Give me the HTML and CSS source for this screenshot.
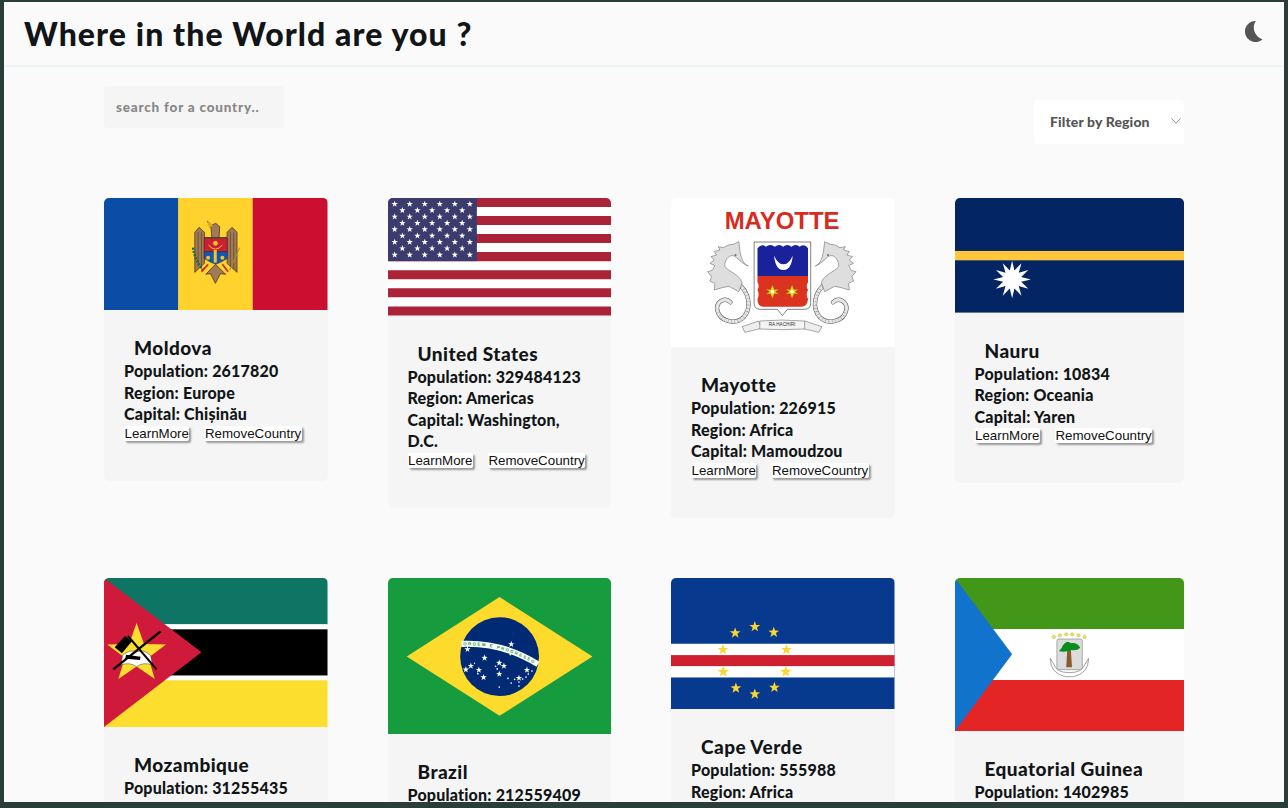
FILE: index.html
```html
<!DOCTYPE html>
<html lang="en">
<head>
<meta charset="utf-8">
<title>Where in the World are you ?</title>
<link rel="stylesheet" href="styles.css">
</head>
<body>
<svg class="defs" width="0" height="0" aria-hidden="true"><defs>
<polygon id="star" points="0,-10 2.4,-3.2 9.5,-3.1 3.8,1.2 5.9,8.1 0,4 -5.9,8.1 -3.8,1.2 -9.5,-3.1 -2.4,-3.2"/>
<g id="seahorse">
<path d="M215,262 C255,290 262,340 235,368 C210,390 165,380 157,345 C153,320 180,305 197,322" fill="none" stroke="#555" stroke-width="13" stroke-linecap="round"/>
<path d="M215,262 C255,290 262,340 235,368 C210,390 165,380 157,345 C153,320 180,305 197,322" fill="none" stroke="#e4e4e4" stroke-width="10" stroke-linecap="round"/>
<path d="M215,262 C255,290 262,340 235,368 C210,390 165,380 157,345" fill="none" stroke="#777" stroke-width="10" stroke-dasharray="1 9"/>
<path d="M250,213 C238,207 230,195 226,172 L222,140 L205,148 L190,150 L176,158 L160,155 L165,165 L148,170 L155,180 L138,185 L148,195 L135,205 L150,212 L142,226 L128,230 L140,245 L135,258 L150,265 L148,285 L172,278 L192,274 L222,290 L232,262 C222,238 195,232 180,215 C178,198 190,180 205,182 C218,186 228,205 250,213 Z" fill="#dedede" stroke="#555" stroke-width="1.5"/>
<circle cx="212" cy="180" r="3" fill="#666"/>
</g>
<g id="flower">
<path d="M0,-21 L6,-6 L20,-8 L9,0 L20,8 L6,6 L0,21 L-6,6 L-20,8 L-9,0 L-20,-8 L-6,-6 Z" fill="#f2d21b" stroke="#7a5a10" stroke-width="1"/>
<circle r="5" fill="#fff"/>
</g>
</defs></svg>
<div class="page">
<header class="topbar">
<h1 class="title">Where in the World are you ?</h1>
<svg class="moon" viewBox="0 0 19 21" aria-label="dark mode"><path d="M11.8 0 A10.5 10.5 0 1 0 18.6 18.2 A12 12 0 0 1 11.8 0 Z"/></svg>
</header>
<main class="content">
<div class="toolbar">
<input class="search" type="text" placeholder="search for a country..">
<div class="filter"><span>Filter by Region</span>
<svg class="chevron" viewBox="0 0 10 6"><path d="M.5.5 5 5.2 9.500.5"/></svg></div>
</div>
<section class="grid">

<article class="card">
<svg class="flag h112" viewBox="12 9 672 336" preserveAspectRatio="none">
<rect x="12" y="9" width="224" height="336" fill="#0a4ca6"/><rect x="235" y="9" width="224" height="336" fill="#ffd22e"/><rect x="459" y="9" width="225" height="336" fill="#cc0f31"/>
<path d="M285,232 V112 L298,97 L314,112 V128 H382 V112 L397,97 L412,112 V232 L382,205 V128 H314 V205 Z" fill="#a27a56" stroke="#33261a" stroke-width="2"/>
<path d="M295,110 V215 M305,112 V222 M392,110 V215 M402,112 V222" stroke="#33261a" stroke-width="1.500"/>
<path d="M322,78 L336,90 L348,85 L360,95 L358,128 H336 L334,100 Z" fill="#a27a56" stroke="#33261a" stroke-width="2"/>
<path d="M322,78 L340,90 L328,100 Z" fill="#e2a626"/>
<path d="M313,130 H383 V170 H313 Z" fill="#cc1f33" stroke="#222" stroke-width="1.500"/>
<path d="M313,170 H383 V190 Q365,202 348,208 Q330,202 313,190 Z" fill="#1357b0" stroke="#222" stroke-width="1.500"/>
<circle cx="347" cy="145" r="7" fill="#f4c52b"/>
<path d="M326,150 Q347,175 368,150" fill="none" stroke="#f4c52b" stroke-width="3"/>
<rect x="342" y="165" width="9" height="38" fill="#f4c52b"/><circle cx="325" cy="188" r="6" fill="#f4c52b"/><circle cx="368" cy="188" r="6" fill="#f4c52b"/>
<path d="M318,238 L347,208 L378,238 L362,236 L347,265 L332,236 Z" fill="#a27a56" stroke="#33261a" stroke-width="2"/>
<path d="M280,158 Q285,195 310,225" fill="none" stroke="#1f6a36" stroke-width="8" stroke-dasharray="6 4"/>
<path d="M420,158 L390,225" fill="none" stroke="#b18e1f" stroke-width="3"/>
<path d="M305,230 L325,208 M385,230 L368,208" stroke="#c8282f" stroke-width="5"/>
</svg>
<div class="info">
<h2 class="name">Moldova</h2>
<p class="line">Population: 2617820</p><p class="line">Region: Europe</p><p class="line">Capital: Chișinău</p>
<div class="actions"><button class="btn">LearnMore</button><button class="btn">RemoveCountry</button></div>
</div>
</article>

<article class="card">
<svg class="flag h118" viewBox="9 9 669 352" preserveAspectRatio="none">
<rect x="9" y="9" width="669" height="352" fill="#fff"/>
<path d="M9,22.500H678M9,76.500H678M9,130.500H678M9,184.500H678M9,238.500H678M9,292.500H678M9,347.500H678" stroke="#ab2337" stroke-width="27"/>
<rect x="9" y="9" width="266" height="189" fill="#3c3b6e"/>
<g fill="#fff">
<use href="#star" x="29" y="27"/><use href="#star" x="74" y="27"/><use href="#star" x="119" y="27"/><use href="#star" x="164" y="27"/><use href="#star" x="209" y="27"/><use href="#star" x="254" y="27"/>
<use href="#star" x="52" y="46"/><use href="#star" x="97" y="46"/><use href="#star" x="141" y="46"/><use href="#star" x="186" y="46"/><use href="#star" x="231" y="46"/>
<use href="#star" x="29" y="65"/><use href="#star" x="74" y="65"/><use href="#star" x="119" y="65"/><use href="#star" x="164" y="65"/><use href="#star" x="209" y="65"/><use href="#star" x="254" y="65"/>
<use href="#star" x="52" y="84"/><use href="#star" x="97" y="84"/><use href="#star" x="141" y="84"/><use href="#star" x="186" y="84"/><use href="#star" x="231" y="84"/>
<use href="#star" x="29" y="103"/><use href="#star" x="74" y="103"/><use href="#star" x="119" y="103"/><use href="#star" x="164" y="103"/><use href="#star" x="209" y="103"/><use href="#star" x="254" y="103"/>
<use href="#star" x="52" y="122"/><use href="#star" x="97" y="122"/><use href="#star" x="141" y="122"/><use href="#star" x="186" y="122"/><use href="#star" x="231" y="122"/>
<use href="#star" x="29" y="141"/><use href="#star" x="74" y="141"/><use href="#star" x="119" y="141"/><use href="#star" x="164" y="141"/><use href="#star" x="209" y="141"/><use href="#star" x="254" y="141"/>
<use href="#star" x="52" y="160"/><use href="#star" x="97" y="160"/><use href="#star" x="141" y="160"/><use href="#star" x="186" y="160"/><use href="#star" x="231" y="160"/>
<use href="#star" x="29" y="179"/><use href="#star" x="74" y="179"/><use href="#star" x="119" y="179"/><use href="#star" x="164" y="179"/><use href="#star" x="209" y="179"/><use href="#star" x="254" y="179"/>
</g>
</svg>
<div class="info">
<h2 class="name">United States</h2>
<p class="line">Population: 329484123</p><p class="line">Region: Americas</p><p class="line">Capital: Washington, D.C.</p>
<div class="actions"><button class="btn">LearnMore</button><button class="btn">RemoveCountry</button></div>
</div>
</article>

<article class="card">
<svg class="flag h149" viewBox="18 9 672 447" preserveAspectRatio="none">
<rect x="18" y="9" width="672" height="447" fill="#fff"/>
<text class="mayotte" x="352" y="103" text-anchor="middle">MAYOTTE</text>
<use href="#seahorse"/>
<use href="#seahorse" transform="translate(702,0) scale(-1,1)"/>
<path d="M268,141 H438 V325 Q438,342 420,343 H368 L353,362 L338,343 H286 Q268,342 268,325 Z" fill="#fff" stroke="#444" stroke-width="2"/>
<path d="M278,160 Q290,145 303,155 Q317,145 330,155 Q344,145 355,155 Q368,145 380,155 Q393,145 405,155 Q420,145 430,160 V230 L430,243 H278 Z" fill="#19229a"/>
<path d="M278,243 H430 V262 Q422,272 430,285 Q422,298 430,312 Q428,338 405,335 H300 Q278,338 278,312 Q285,298 278,285 Q285,272 278,262 Z" fill="#dc3220"/>
<path d="M328,182 Q332,225 356,225 Q380,225 384,182 Q372,208 356,208 Q340,208 328,182 Z" fill="#fff"/>
<use href="#flower" x="323" y="290"/><use href="#flower" x="382" y="290"/>
<path d="M232,395 L282,378 L290,400 L240,412 Z M472,395 L420,378 L412,400 L462,412 Z" fill="#eee" stroke="#555" stroke-width="1.500"/>
<path d="M285,378 Q350,372 420,378 V402 Q350,406 285,402 Z" fill="#f4f4f4" stroke="#555" stroke-width="1.500"/>
<text class="motto" x="352" y="393" text-anchor="middle">RA HACHIRI</text>
</svg>
<div class="info">
<h2 class="name">Mayotte</h2>
<p class="line">Population: 226915</p><p class="line">Region: Africa</p><p class="line">Capital: Mamoudzou</p>
<div class="actions"><button class="btn">LearnMore</button><button class="btn">RemoveCountry</button></div>
</div>
</article>

<article class="card">
<svg class="flag h115" viewBox="15 9 687 342" preserveAspectRatio="none">
<rect x="15" y="9" width="687" height="342" fill="#032564"/>
<rect x="15" y="167" width="687" height="28" fill="#ffc73e"/>
<polygon fill="#fff" points="186,196 193,225 214,203.500 205.800,232.200 234.500,224 213,245 242,252 213,259 234.500,280 205.800,271.800 214,300.500 193,279 186,308 179,279 158,300.500 166.200,271.800 137.500,280 159,259 130,252 159,245 137.500,224 166.200,232.200 158,203.500 179,225"/>
</svg>
<div class="info">
<h2 class="name">Nauru</h2>
<p class="line">Population: 10834</p><p class="line">Region: Oceania</p><p class="line">Capital: Yaren</p>
<div class="actions"><button class="btn">LearnMore</button><button class="btn">RemoveCountry</button></div>
</div>
</article>

<article class="card">
<svg class="flag h149" viewBox="12 24 672 447" preserveAspectRatio="none">
<rect x="12" y="24" width="672" height="139" fill="#0e7565"/><rect x="12" y="163" width="672" height="15" fill="#fff"/><rect x="12" y="178" width="672" height="139" fill="#000"/><rect x="12" y="317" width="672" height="14" fill="#fff"/><rect x="12" y="331" width="672" height="140" fill="#fcdf2e"/>
<polygon points="12,24 305,247 12,471" fill="#d01a3c"/>
<use href="#star" fill="#fcdf2e" transform="translate(110,252) scale(9.3)"/>
<path d="M68,256 Q90,236 110,246 Q130,236 152,256 L158,285 Q130,275 110,290 Q90,275 62,285 Z" fill="#fff" stroke="#333" stroke-width="1.500"/>
<path d="M40,298 L182,184" stroke="#000" stroke-width="7" fill="none"/>
<path d="M84,198 L170,298" stroke="#000" stroke-width="6" fill="none"/>
<path d="M44,232 L75,198 L96,214 L66,250 Z" fill="#000"/>
<path d="M78,254 L122,260 L120,270 L76,266 Z" fill="#000"/>
</svg>
<div class="info">
<h2 class="name">Mozambique</h2>
<p class="line">Population: 31255435</p><p class="line">Region: Africa</p><p class="line">Capital: Maputo</p>
<div class="actions"><button class="btn">LearnMore</button><button class="btn">RemoveCountry</button></div>
</div>
</article>

<article class="card">
<svg class="flag h156" viewBox="9 24 669 468" preserveAspectRatio="none">
<rect x="9" y="24" width="669" height="468" fill="#169b3f"/>
<polygon points="343,81 621,259 343,436 65,259" fill="#fddb2c"/>
<circle cx="343" cy="259" r="118" fill="#012a74"/>
<path d="M229,221 Q350,215 458,282" fill="none" stroke="#fff" stroke-width="18"/>
<path id="bandtext" d="M234,226 Q350,220 455,286" fill="none"/>
<text class="motto-br"><textPath href="#bandtext">ORDEM E PROGRESSO</textPath></text>
<g fill="#fff">
<use href="#star" x="247" y="237"/><use href="#star" x="378" y="222"/><use href="#star" x="298" y="263" /><use href="#star" x="257" y="287" /><use href="#star" x="242" y="298" /><use href="#star" x="281" y="299" /><use href="#star" x="295" y="321"/><use href="#star" x="342" y="278" /><use href="#star" x="356" y="287" /><use href="#star" x="342" y="311"/><use href="#star" x="425" y="299"/><use href="#star" x="401" y="323"/>
<circle cx="268" cy="279" r="2"/><circle cx="278" cy="310" r="2.500"/><circle cx="375" cy="253" r="2.500"/><circle cx="331" cy="288" r="2.500"/><circle cx="336" cy="296" r="2.500"/><circle cx="368" cy="324" r="2.500"/><circle cx="378" cy="338" r="2.500"/><circle cx="388" cy="327" r="2.500"/><circle cx="412" cy="326" r="2.500"/><circle cx="401" cy="335" r="2.500"/><circle cx="401" cy="347" r="2.500"/><circle cx="422" cy="320" r="2.500"/><circle cx="429" cy="311" r="2.500"/><circle cx="440" cy="302" r="2.500"/><circle cx="342" cy="350" r="2.500"/>
</g>
</svg>
<div class="info">
<h2 class="name">Brazil</h2>
<p class="line">Population: 212559409</p><p class="line">Region: Americas</p><p class="line">Capital: Brasília</p>
<div class="actions"><button class="btn">LearnMore</button><button class="btn">RemoveCountry</button></div>
</div>
</article>

<article class="card">
<svg class="flag h132" viewBox="18 24 672 394" preserveAspectRatio="none">
<rect x="18" y="24" width="672" height="394" fill="#073a8f"/>
<rect x="18" y="221" width="672" height="101" fill="#fff"/>
<rect x="18" y="255" width="672" height="33" fill="#cf2030"/>
<g fill="#fcd532">
<use href="#star" transform="translate(270,170) scale(1.700)"/><use href="#star" transform="translate(211,189) scale(1.700)"/><use href="#star" transform="translate(327,187) scale(1.700)"/><use href="#star" transform="translate(174,239) scale(1.700)"/><use href="#star" transform="translate(365,239) scale(1.700)"/><use href="#star" transform="translate(175,305) scale(1.800)"/><use href="#star" transform="translate(363,305) scale(1.800)"/><use href="#star" transform="translate(213,354) scale(1.700)"/><use href="#star" transform="translate(270,372) scale(1.700)"/><use href="#star" transform="translate(329,352) scale(1.700)"/>
</g>
</svg>
<div class="info">
<h2 class="name">Cape Verde</h2>
<p class="line">Population: 555988</p><p class="line">Region: Africa</p><p class="line">Capital: Praia</p>
<div class="actions"><button class="btn">LearnMore</button><button class="btn">RemoveCountry</button></div>
</div>
</article>

<article class="card">
<svg class="flag h153" viewBox="15 24 687 459" preserveAspectRatio="none">
<rect x="15" y="24" width="687" height="153" fill="#439718"/><rect x="15" y="177" width="687" height="153" fill="#fff"/><rect x="15" y="330" width="687" height="153" fill="#e32525"/>
<polygon points="15,24 186,253 15,483" fill="#1273cd"/>
<g fill="#f5ea2c" stroke="#888" stroke-width="1"><circle cx="311" cy="201" r="5"/><circle cx="329" cy="196" r="5"/><circle cx="348" cy="193" r="5"/><circle cx="366" cy="193" r="5"/><circle cx="385" cy="196" r="5"/><circle cx="403" cy="201" r="5"/></g>
<path d="M300,265 Q300,310 345,320 H370 Q415,310 415,265 L403,285 Q395,308 357,308 Q320,308 312,285 Z" fill="#fff" stroke="#777" stroke-width="2"/>
<rect x="320" y="207" width="76" height="92" rx="6" fill="#dcdcdc" stroke="#888" stroke-width="2"/>
<path d="M351,240 H362 L365,292 H348 Z" fill="#8a5a28"/>
<path d="M327,242 Q335,236 338,226 Q350,208 362,220 Q380,216 390,233 Q380,243 362,240 Q345,248 327,244 Z" fill="#0b8c1e"/>
</svg>
<div class="info">
<h2 class="name">Equatorial Guinea</h2>
<p class="line">Population: 1402985</p><p class="line">Region: Africa</p><p class="line">Capital: Malabo</p>
<div class="actions"><button class="btn">LearnMore</button><button class="btn">RemoveCountry</button></div>
</div>
</article>

</section>
</main>
</div>
</body>
</html>
```

FILE: styles.css
```css
* { box-sizing: border-box; }
html, body { margin: 0; height: 100%; }
body {
  background: #2a3d38;
  padding: 2px 4px 6px;
  overflow: hidden;
  font-family: Lato, "Noto Sans", sans-serif;
  color: #111517;
}
.defs { position: absolute; }
.page {
  height: 800px;
  overflow: hidden;
  background: #fafafa;
}
.topbar {
  height: 65px;
  padding: 0 20px;
  display: flex;
  align-items: center;
  justify-content: space-between;
  border-bottom: 2px solid #edf5f8;
}
.title { margin: 0; font-size: 32px; font-weight: 900; line-height: 1; letter-spacing: 1.080px; }
.moon { width: 19px; height: 21px; fill: #555; margin-right: 1px; margin-top: -4px; }
.content { padding: 19px 100px 0; }
.toolbar { display: flex; justify-content: space-between; align-items: flex-start; }
.search {
  width: 180px;
  height: 42px;
  border: 0;
  border-radius: 4px;
  background: #f5f5f5;
  padding: 0 12px;
  font: 900 13.500px Lato, sans-serif;
  letter-spacing: .8px;
}
.search::placeholder { color: #888; opacity: 1; }
.filter {
  width: 150px;
  height: 44px;
  margin-top: 14px;
  padding: 0 3px 2px 16px;
  background: #fff;
  border-radius: 4px;
  display: flex;
  align-items: center;
  justify-content: space-between;
  font-size: 14px;
  font-weight: 900;
  letter-spacing: .13px;
  color: #555;
}
.chevron { width: 10px; height: 6px; fill: none; stroke: #777; stroke-width: .8; }
.grid {
  margin-top: 54px;
  display: grid;
  grid-template-columns: 223.5px 223.5px 223.5px 1fr;
  gap: 60px;
  align-items: start;
}
.card { background: #f5f5f5; border-radius: 5px; overflow: hidden; }
.flag { display: block; width: 100%; }
.h112 { height: 112px; }
.h115 { height: 114.600px; }
.h118 { height: 117.600px; }
.h132 { height: 131.500px; }
.h149 { height: 149px; }
.h153 { height: 153px; }
.h156 { height: 156.500px; }
.info { padding: 26px 20px 40px; }
.name { margin: 0; padding-left: 10px; font-size: 19px; line-height: 24px; font-weight: 900; letter-spacing: .45px; }
.line { margin: 0; font-size: 16px; line-height: 21.600px; font-weight: 900; letter-spacing: .2px; }
.actions { display: flex; gap: 15px; margin-top: 1px; }
.btn {
  border: 0;
  border-radius: 2px;
  background: #fff;
  padding: 0 .5px;
  height: 15px;
  font: 13.330px/15px "Liberation Sans", Arial, sans-serif;
  color: #111;
  box-shadow: 2px 2px 2px #999;
}
.mayotte { font: 700 72px "Liberation Sans", sans-serif; fill: #d72b1f; }
.motto { font: 14px "Liberation Sans", sans-serif; fill: #333; }
.motto-br { font: 700 13px "Liberation Sans", sans-serif; fill: #169b3f; letter-spacing: 4.500px; }
```
